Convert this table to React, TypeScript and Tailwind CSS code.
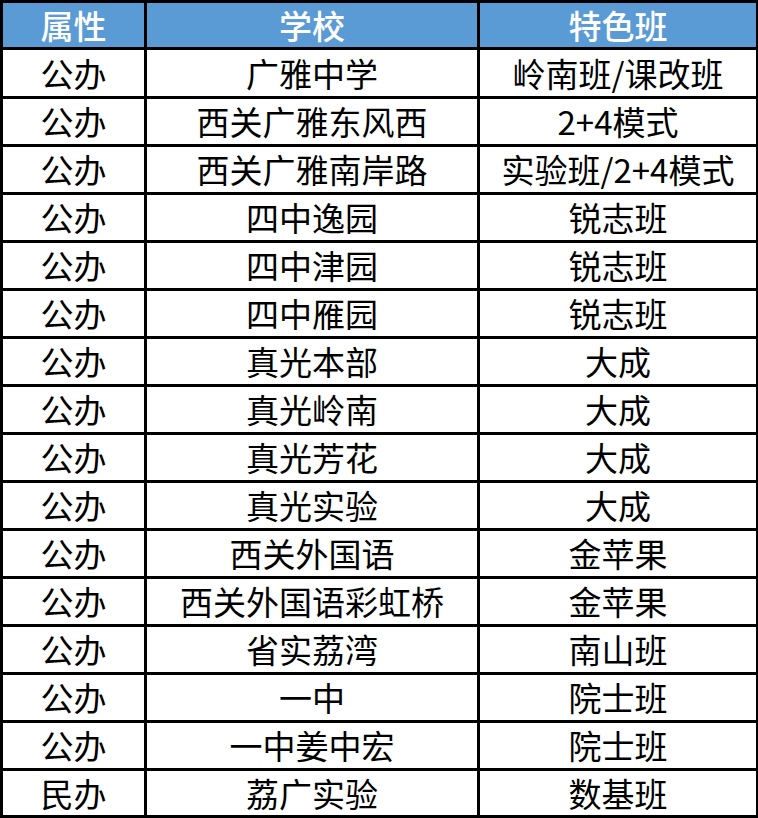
import React from "react";

const rows: [string, string, string][] = [
  ["公办", "广雅中学", "岭南班/课改班"],
  ["公办", "西关广雅东风西", "2+4模式"],
  ["公办", "西关广雅南岸路", "实验班/2+4模式"],
  ["公办", "四中逸园", "锐志班"],
  ["公办", "四中津园", "锐志班"],
  ["公办", "四中雁园", "锐志班"],
  ["公办", "真光本部", "大成"],
  ["公办", "真光岭南", "大成"],
  ["公办", "真光芳花", "大成"],
  ["公办", "真光实验", "大成"],
  ["公办", "西关外国语", "金苹果"],
  ["公办", "西关外国语彩虹桥", "金苹果"],
  ["公办", "省实荔湾", "南山班"],
  ["公办", "一中", "院士班"],
  ["公办", "一中姜中宏", "院士班"],
  ["民办", "荔广实验", "数基班"],
];

export default function App() {
  const heights = ["h-[46px]", ...Array(14).fill("h-[45px]"), "h-[44px]"];
  return (
    <div
      className="w-[758px] h-[818px] bg-black pt-[3px] pl-[3px] pr-[2px] pb-[3px] flex flex-col gap-[3px] text-[33px] leading-none"
      style={{ fontFamily: '"Noto Sans CJK SC", "Noto Sans", sans-serif' }}
    >
      <div className="grid grid-cols-[141px_330px_276px] gap-x-[3px] h-[44px] shrink-0">
        {["属性", "学校", "特色班"].map((t) => (
          <div key={t} className="bg-[#5b9bd5] text-white font-medium flex items-center justify-center">
            {t}
          </div>
        ))}
      </div>
      {rows.map((r, i) => (
        <div key={i} className={`grid grid-cols-[141px_330px_276px] gap-x-[3px] shrink-0 ${heights[i]}`}>
          {r.map((c, j) => (
            <div key={j} className="bg-white text-black flex items-center justify-center">
              {c}
            </div>
          ))}
        </div>
      ))}
    </div>
  );
}
